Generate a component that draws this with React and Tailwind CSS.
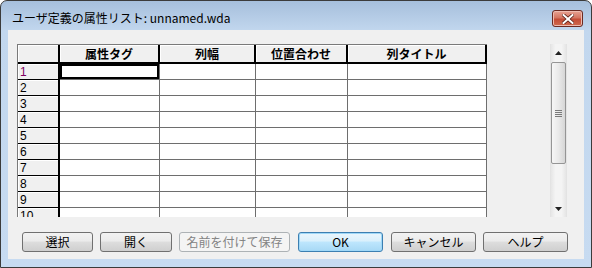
import React from 'react';

const cols = [
  { label: '属性タグ', w: 'w-[100px]' },
  { label: '列幅', w: 'w-[96px]' },
  { label: '位置合わせ', w: 'w-[92px]' },
  { label: '列タイトル', w: 'w-[139px]' },
];

const rows = [1, 2, 3, 4, 5, 6, 7, 8, 9, 10];

const jp = "font-['Noto_Sans_CJK_JP','Noto_Sans',sans-serif]";

const Button = ({ label, w, variant = 'normal' }) => {
  const styles = {
    normal:
      'border-[#707070] bg-[linear-gradient(to_bottom,#f2f2f2_0%,#ebebeb_45%,#dddddd_50%,#cfcfcf_100%)] text-black',
    default:
      'border-[#3c7fb1] bg-[linear-gradient(to_bottom,#eaf6fd_0%,#d9f0fc_45%,#bee6fd_50%,#a7d9f5_100%)] text-black shadow-[inset_0_0_0_1px_#9fd8f8]',
    disabled: 'border-[#adb2b5] bg-[#f4f4f4] text-[#838383]',
  };
  return (
    <div
      className={`${w} h-[20px] rounded-[3px] border flex items-center justify-center text-[12px] leading-none ${jp} ${styles[variant]}`}
    >
      {label}
    </div>
  );
};

const Scrollbar = () => (
  <div className="w-[17px] h-[173px] flex flex-col bg-[linear-gradient(to_right,#e6e6e6,#f4f4f4_30%,#f4f4f4_70%,#e6e6e6)] border-x border-[#e3e3e3]">
    <div className="h-[18px] flex items-center justify-center">
      <svg width="7" height="4" viewBox="0 0 7 4">
        <path d="M0 4 L3.5 0 L7 4 Z" fill="#222" />
      </svg>
    </div>
    <div className="h-[102px] mx-[0px] rounded-[2px] border border-[#959595] bg-[linear-gradient(to_right,#f6f6f6,#e9e9e9_50%,#d6d6d6)] flex flex-col items-center justify-center gap-[1px]">
      <div className="w-[7px] h-[1px] bg-[#7a7a7a]" />
      <div className="w-[7px] h-[1px] bg-[#7a7a7a]" />
      <div className="w-[7px] h-[1px] bg-[#7a7a7a]" />
      <div className="w-[7px] h-[1px] bg-[#7a7a7a]" />
    </div>
    <div className="flex-1" />
    <div className="h-[17px] flex items-center justify-center">
      <svg width="7" height="4" viewBox="0 0 7 4">
        <path d="M0 0 L7 0 L3.5 4 Z" fill="#222" />
      </svg>
    </div>
  </div>
);

export default function App() {
  return (
    <div className="w-[592px] h-[268px] flex flex-col border border-[#3b3b3b] rounded-t-[7px] overflow-hidden bg-[linear-gradient(to_bottom,#a6bfdc_0px,#c2d7ee_30px,#c7dbf1_100%)]">
      {/* title bar */}
      <div className="h-[29px] flex items-start justify-between shrink-0">
        <div className={`pl-[11px] pt-[9px] text-[12px] leading-[16px] text-black ${jp}`}>
          ユーザ定義の属性リスト: unnamed.wda
        </div>
        <div className="mt-[9px] mr-[8px] w-[31px] h-[17px] rounded-[3px] border border-[#6b2a22] bg-[linear-gradient(to_bottom,#e8a394_0%,#d47561_45%,#c44c36_55%,#cf6a4e_100%)] shadow-[inset_0_0_0_1px_#eebbb0] flex items-center justify-center">
          <svg width="12" height="10" viewBox="0 0 12 10">
            <path
              d="M1.5 1 L10.5 9 M10.5 1 L1.5 9"
              stroke="#5a2018"
              strokeWidth="3.6"
              strokeLinecap="square"
            />
            <path
              d="M1.5 1 L10.5 9 M10.5 1 L1.5 9"
              stroke="#ffffff"
              strokeWidth="2"
              strokeLinecap="square"
            />
          </svg>
        </div>
      </div>

      {/* client area */}
      <div className="mx-[7px] h-[229px] shrink-0 bg-[#f0f0f0] flex flex-col">
        <div className="ml-[9px] mt-[14px] w-[550px] h-[173px] flex">
          <div className="w-[470px] h-[173px] overflow-hidden border-l border-t border-[#7a7a7a] flex flex-col">
            {/* header */}
            <div className="flex h-[19px] shrink-0">
              <div className="w-[42px] h-[19px] border-r-2 border-b-2 border-black bg-[#f0f0f0] shadow-[inset_1px_1px_0_#fff]" />
              {cols.map((c) => (
                <div
                  key={c.label}
                  className={`${c.w} h-[19px] border-r-2 border-b-2 border-black bg-[#f0f0f0] shadow-[inset_1px_1px_0_#fff] flex items-center justify-center text-[12px] font-bold leading-none ${jp}`}
                >
                  {c.label}
                </div>
              ))}
            </div>
            {rows.map((r) => (
              <div key={r} className="flex h-[16px] shrink-0">
                <div
                  className={`w-[42px] h-[16px] border-r-2 border-b border-black bg-[#f0f0f0] shadow-[inset_1px_1px_0_#fff] pl-[2px] flex items-center text-[12px] leading-none font-['Liberation_Sans',sans-serif] ${
                    r === 1 ? 'text-[#800060]' : 'text-black'
                  }`}
                >
                  {r}
                </div>
                {cols.map((c, i) => (
                  <div
                    key={c.label}
                    className={`${c.w} h-[16px] border-r border-b border-[#6e6e6e] bg-white ${
                      r === 1 && i === 0 ? 'shadow-[inset_0_0_0_2px_#000]' : ''
                    }`}
                  />
                ))}
              </div>
            ))}
          </div>
          <div className="flex-1" />
          <Scrollbar />
        </div>

        {/* buttons */}
        <div className="flex mt-[15px] ml-[14px]">
          <Button label="選択" w="w-[71px]" />
          <div className="ml-[7px]">
            <Button label="開く" w="w-[72px]" />
          </div>
          <div className="ml-[7px]">
            <Button label="名前を付けて保存" w="w-[111px]" variant="disabled" />
          </div>
          <div className="ml-[8px]">
            <Button label="OK" w="w-[85px]" variant="default" />
          </div>
          <div className="ml-[8px]">
            <Button label="キャンセル" w="w-[85px]" />
          </div>
          <div className="ml-[7px]">
            <Button label="ヘルプ" w="w-[85px]" />
          </div>
        </div>
      </div>
    </div>
  );
}
